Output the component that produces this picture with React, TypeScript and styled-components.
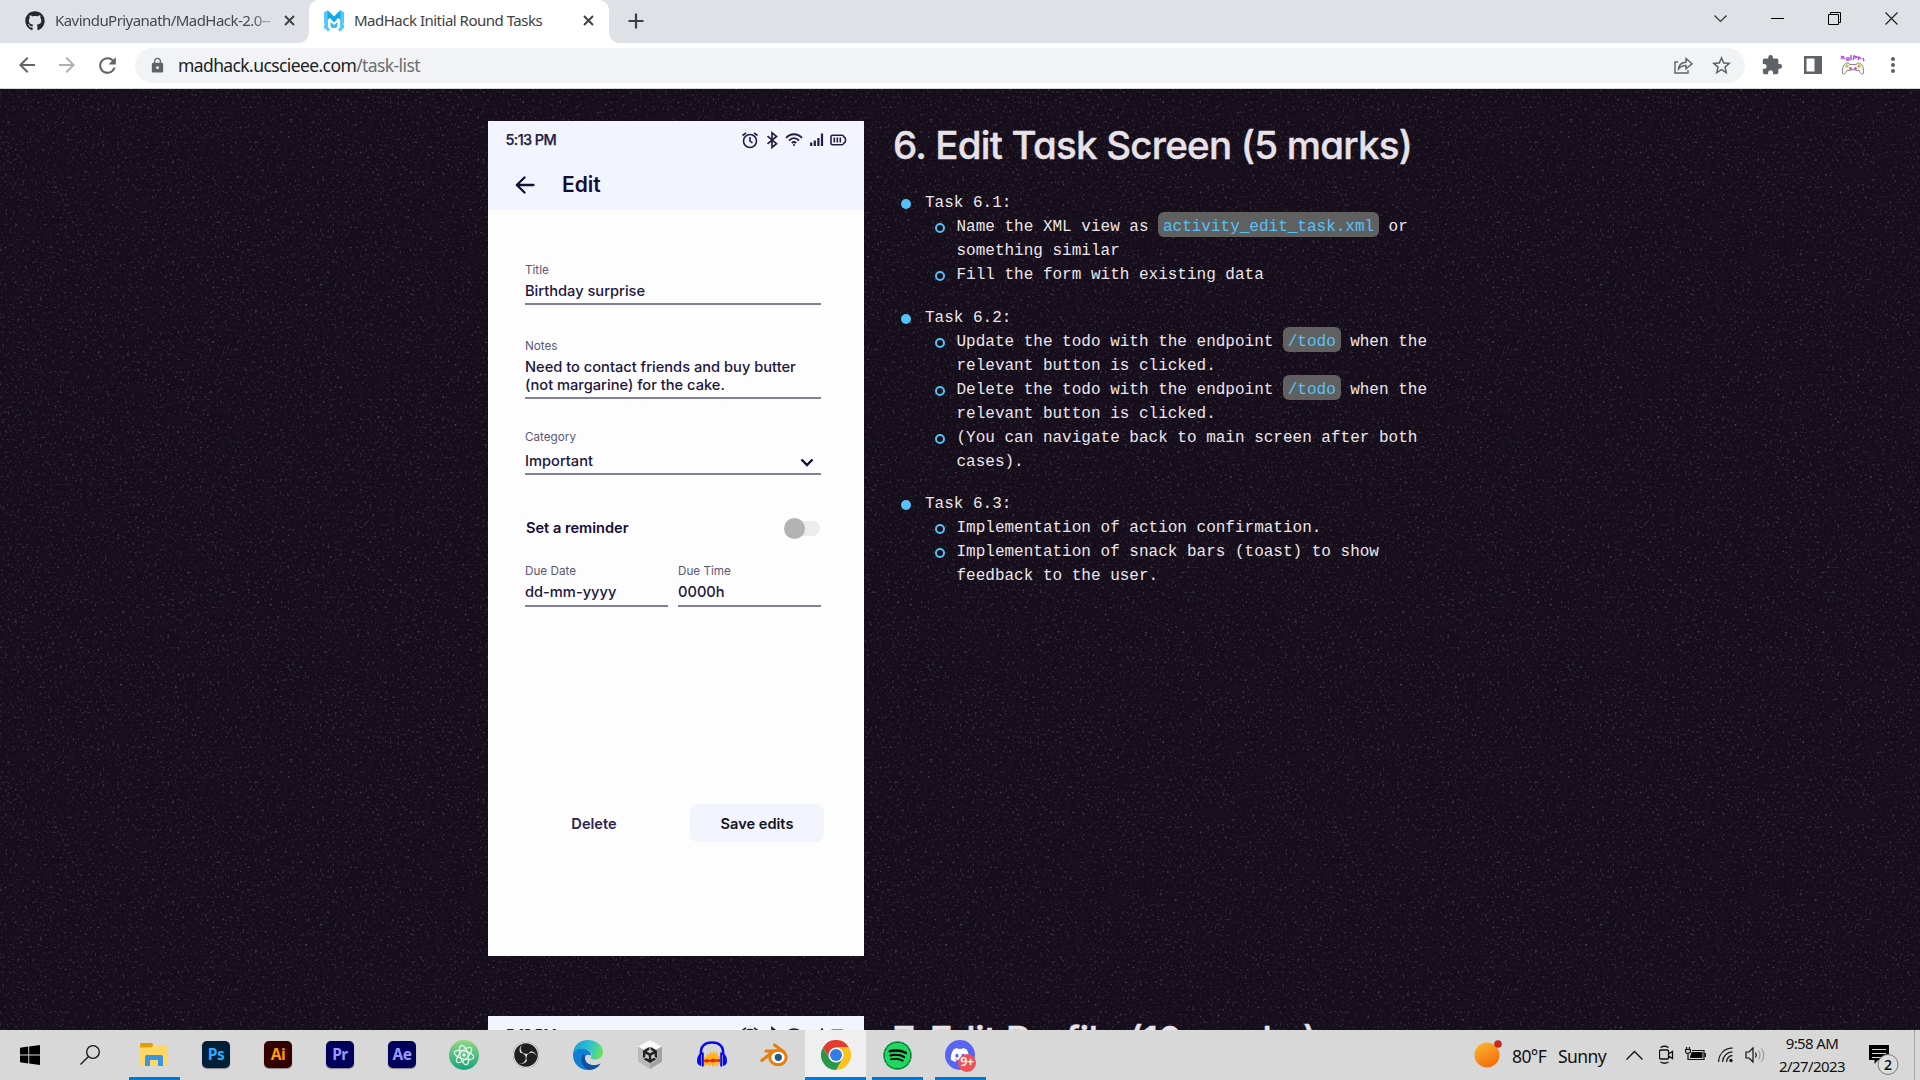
import React from "react";
import styled, { createGlobalStyle } from "styled-components";
import {
  MdArrowBack,
  MdArrowForward,
  MdRefresh,
  MdLock,
  MdStarOutline,
  MdExtension,
  MdMoreVert,
} from "react-icons/md";
import { FaGithub, FaSpotify, FaDiscord } from "react-icons/fa";
import { SiObsstudio, SiUnity } from "react-icons/si";

const GlobalStyle = createGlobalStyle`
  * { box-sizing: border-box; }
  html, body { margin: 0; padding: 0; }
  body { width: 1920px; height: 1080px; overflow: hidden; background: #170e1b; }
  svg { display: block; flex-shrink: 0; }
`;

const ui = `"Noto Sans", "Open Sans", sans-serif`;

const Screen = styled.div`
  width: 1920px;
  height: 1080px;
  display: flex;
  flex-direction: column;
  overflow: hidden;
`;

/* ---------- browser chrome ---------- */

const TabStrip = styled.div`
  height: 43px;
  background: #dee1e6;
  display: flex;
  align-items: stretch;
`;

const Tab = styled.div<{ $active?: boolean; $width: number }>`
  position: relative;
  width: ${(p) => p.$width}px;
  display: flex;
  align-items: center;
  padding: 0 15px 2px 15px;
  padding-right: ${(p) => (p.$active ? 15 : 14)}px;
  padding-left: ${(p) => (p.$active ? 15 : 25)}px;
  background: ${(p) => (p.$active ? "#fff" : "transparent")};
  border-radius: 10px 10px 0 0;
  &::before,
  &::after {
    content: "";
    display: ${(p) => (p.$active ? "block" : "none")};
    position: absolute;
    bottom: 0;
    width: 10px;
    height: 10px;
  }
  &::before {
    left: -10px;
    background: radial-gradient(circle at 0 0, transparent 9.5px, #fff 10px);
  }
  &::after {
    right: -10px;
    background: radial-gradient(circle at 100% 0, transparent 9.5px, #fff 10px);
  }
`;

const TabTitle = styled.span<{ $fade?: boolean }>`
  flex: 1;
  margin-left: 10px;
  padding-bottom: 2px;
  font: 400 15px/20px ${ui};
  letter-spacing: ${(p) => (p.$fade ? -0.55 : -0.5)}px;
  color: ${(p) => (p.$fade ? "#45494d" : "#3c4043")};
  white-space: nowrap;
  overflow: hidden;
  ${(p) => p.$fade && "mask-image: linear-gradient(90deg, #000 85%, transparent 99%);"}
`;

const NewTab = styled.div`
  display: flex;
  align-items: center;
  margin-left: 19px;
  padding-bottom: 1px;
`;

const WindowButtons = styled.div`
  margin-left: auto;
  display: flex;
  align-items: flex-start;
  gap: 44px;
  padding: 12px 22px 0 0;
`;

const Toolbar = styled.div`
  height: 46px;
  background: #fff;
  border-bottom: 1px solid #d5d7da;
  display: flex;
  align-items: center;
  padding: 0 10px 1px 15px;
  color: #5f6368;
`;

const NavButton = styled.div<{ $dim?: boolean }>`
  width: 24px;
  height: 24px;
  margin-right: 16px;
  opacity: ${(p) => (p.$dim ? 0.5 : 1)};
`;

const Omnibox = styled.div`
  width: 1610px;
  height: 35px;
  margin-right: 16px;
  border-radius: 18px;
  background: #f1f3f4;
  display: flex;
  align-items: center;
  padding: 0 12px 0 14px;
`;

const Url = styled.div`
  flex: 1;
  margin-left: 12px;
  padding-bottom: 1px;
  font: 400 17.5px/26px ${ui};
  letter-spacing: -0.6px;
  color: #6a6e72;
  b {
    font-weight: 400;
    color: #202124;
  }
`;

const OmniActions = styled.div`
  display: flex;
  align-items: center;
  gap: 17px;
`;

const Extensions = styled.div`
  display: flex;
  align-items: center;
  gap: 18px;
  svg:first-child {
    margin-right: 3px;
  }
  svg:last-child {
    margin-left: -3px;
  }
`;

/* ---------- page ---------- */

const Page = styled.main`
  position: relative;
  height: 941px;
  background: #170e1b;
  overflow: hidden;
`;

const Grain = styled.svg`
  position: absolute;
  inset: 0;
  width: 100%;
  height: 100%;
`;

const Sections = styled.div`
  position: relative;
  display: flex;
  flex-direction: column;
  gap: 60px;
  padding: 32px 0 0 488px;
`;

const Section = styled.section`
  display: flex;
  gap: 30px;
  height: 835px;
`;

const Phone = styled.div`
  width: 376px;
  height: 835px;
  flex-shrink: 0;
  background: #fdfdfd;
  font-family: Inter, sans-serif;
  color: #150d35;
  display: flex;
  flex-direction: column;
`;

const PhoneHeader = styled.div`
  height: 89px;
  background: #f2f4fe;
`;

const StatusBar = styled.div`
  height: 37px;
  display: flex;
  align-items: center;
  padding: 0 17px 0 17.5px;
  color: #241c42;
`;

const Clock = styled.span`
  flex: 1;
  font-size: 14.5px;
  font-weight: 500;
  letter-spacing: -0.6px;
  -webkit-text-stroke: 0.25px #241c42;
`;

const AppBar = styled.div`
  height: 53px;
  display: flex;
  align-items: center;
  gap: 27px;
  padding-left: 27px;
  font-size: 21px;
  font-weight: 600;
`;

const Form = styled.div`
  padding: 51px 43px 0 37px;
  display: flex;
  flex-direction: column;
`;

const Field = styled.div<{ $gap?: number; $bottom?: number; $after?: number }>`
  flex: 1;
  display: flex;
  flex-direction: column;
  gap: ${(p) => p.$gap ?? 3}px;
  padding-bottom: ${(p) => p.$bottom ?? 3}px;
  margin-bottom: ${(p) => p.$after ?? 0}px;
  border-bottom: 2px solid #827f97;
`;

const Label = styled.span`
  font-size: 11.7px;
  line-height: 18px;
  font-weight: 400;
  color: #5c5775;
`;

const Value = styled.span`
  display: flex;
  justify-content: space-between;
  align-items: center;
  padding-right: 7px;
  font-size: 14.65px;
  line-height: 18px;
  font-weight: 500;
  color: #1e163d;
  white-space: pre-line;
`;

const ReminderRow = styled.div`
  display: flex;
  align-items: center;
  justify-content: space-between;
  height: 21px;
  margin: 42px 1px 24px 1px;
  font-size: 14.6px;
  font-weight: 600;
`;

const Switch = styled.div`
  width: 30px;
  height: 15px;
  margin-top: 1px;
  display: flex;
  align-items: center;
  border-radius: 7.5px;
  background: #ececec;
`;

const Knob = styled.span`
  width: 21px;
  height: 21px;
  flex-shrink: 0;
  margin-left: -6px;
  border-radius: 50%;
  background: #b3b3b3;
`;

const FieldPair = styled.div`
  display: flex;
  gap: 10px;
`;

const Actions = styled.div`
  display: flex;
  align-items: center;
  justify-content: flex-end;
  margin-top: auto;
  padding: 0 40px 0 0;
  margin-bottom: 114px;
`;

const PhoneButton = styled.button<{ $filled?: boolean }>`
  width: ${(p) => (p.$filled ? 134 : 120)}px;
  height: 38px;
  margin-right: ${(p) => (p.$filled ? 0 : 36)}px;
  padding: 2px 0 0;
  border: 0;
  border-radius: 8px;
  background: ${(p) => (p.$filled ? "#f2f4fe" : "transparent")};
  color: ${(p) => (p.$filled ? "#16131c" : "#2d2450")};
  font: 600 14.6px/18px Inter, sans-serif;
`;

const Notes = styled.div`
  width: 560px;
`;

const Heading = styled.h2`
  margin: 0 0 22px -1px;
  font: 500 38.5px/48px Inter, sans-serif;
  font-feature-settings: "cv11";
  letter-spacing: -0.76px;
  -webkit-text-stroke: 0.4px #e7e1e8;
  color: #e7e1e8;
  white-space: nowrap;
`;

const Mono = styled.div`
  font: 400 16px/24px "Liberation Mono", monospace;
  color: #ebe6ec;
`;

const Task = styled.div`
  margin-bottom: 18.6px;
`;

const Item = styled.div<{ $sub?: boolean }>`
  display: flex;
  padding-left: ${(p) => (p.$sub ? 41 : 7)}px;
  white-space: pre;
`;

const Dot = styled.span`
  width: 10px;
  height: 10px;
  margin: 8px 14px 0 0;
  border-radius: 50%;
  background: #55c2f7;
`;

const Ring = styled.span`
  width: 10px;
  height: 10px;
  margin: 8px 11.500px 0 0;
  border-radius: 50%;
  border: 2px solid #55c2f7;
`;

const Code = styled.code`
  font: inherit;
  color: #55c2f7;
  background: #606060;
  border-radius: 6px;
  padding: 6px 4.8px 1px;
`;

/* ---------- taskbar ---------- */

const Taskbar = styled.footer`
  height: 50px;
  background: #d8d8d8;
  display: flex;
  align-items: stretch;
  font-family: ${ui};
  color: #111;
`;

const TaskCell = styled.div<{ $width?: number; $before?: number; $open?: boolean; $active?: boolean }>`
  width: ${(p) => p.$width ?? 62}px;
  margin-left: ${(p) => p.$before ?? 0}px;
  display: flex;
  align-items: center;
  justify-content: center;
  background: ${(p) => {
    const line = "linear-gradient(#0078d7, #0078d7)";
    if (p.$active) return `${line} 50% 100% / 61px 3px no-repeat, #efefef`;
    if (p.$open) return `${line} 50% 100% / 51px 3px no-repeat`;
    return "transparent";
  }};
`;

const Adobe = styled.span<{ $bg: string; $fg: string }>`
  width: 28px;
  height: 27px;
  margin-bottom: 2px;
  border-radius: 5px;
  background: ${(p) => p.$bg};
  color: ${(p) => p.$fg};
  font: 700 15.5px/26px ${ui};
  letter-spacing: -0.5px;
  text-align: center;
  box-shadow: 0 1px 1px rgba(0, 0, 0, 0.35);
`;

const Round = styled.span<{ $bg: string; $fg: string; $size: number }>`
  width: ${(p) => p.$size}px;
  height: ${(p) => p.$size}px;
  border-radius: 50%;
  background: ${(p) => p.$bg};
  color: ${(p) => p.$fg};
  position: relative;
  display: flex;
  align-items: center;
  justify-content: center;
`;

const SpotifyMark = styled(FaSpotify)`
  color: #1ed760;
  background: #000;
  border: 1px solid #1ed760;
  border-radius: 50%;
`;

const Badge = styled.span`
  position: absolute;
  left: 13px;
  top: 14px;
  width: 18px;
  height: 18px;
  border-radius: 50%;
  background: #ef5254;
  color: #fff;
  font: 600 12.5px/16px ${ui};
  letter-spacing: -0.5px;
  text-align: center;
`;

const Tray = styled.div`
  margin-left: auto;
  display: flex;
  align-items: center;
`;

const Weather = styled.span`
  width: 94px;
  margin-left: 10px;
  padding-top: 1px;
  display: flex;
  justify-content: space-between;
  font-size: 17.5px;
  line-height: 24px;
  letter-spacing: -0.6px;
`;

const TrayIcons = styled.div`
  display: flex;
  align-items: center;
  margin-left: 20px;
`;

const DateTime = styled.div`
  width: 74px;
  margin-left: 9px;
  font-size: 15px;
  line-height: 23px;
  letter-spacing: -0.6px;
  text-align: center;
  white-space: nowrap;
`;

const Notify = styled.div`
  margin-left: 17px;
  width: 49px;
  height: 50px;
  border-right: 1px solid #a5a5a5;
  margin-right: 5px;
`;

const CloseGlyph = () => (
  <svg width="11" height="11" viewBox="0 0 11 11" stroke="#3c4043" strokeWidth="1.9">
    <path d="M1 1l9 9M10 1l-9 9" />
  </svg>
);

const Favicon = () => (
  <svg width="20" height="22" viewBox="0 0 20 22">
    <path d="M0 2l4-1.500V17l2 3-2 1.500-4-3.500v-3l1-1-1-1zM20 2l-4-1.500V17l-2 3 2 1.500 4-3.500v-3l-1-1 1-1z" fill="#55c8fa" />
    <path d="M3.500 0L10 6.500 16.500 0v9.500L14 8l-4 4.500L6 8l-2.500 1.500z" fill="#10abe8" />
    <path d="M6.500 12l3.500 3 3.500-3v4L12 18H8l-1.500-2z" fill="#35bbf4" />
  </svg>
);

const PhoneStatusIcons = () => (
  <svg width="106" height="20" viewBox="0 0 106 20" fill="none" stroke="#241c42" strokeWidth="1.6">
    <circle cx="9" cy="11" r="6.500" />
    <path d="M9 7v4l2.500 2M1.500 5.500L5 2.800M16.500 5.500L13 2.800" />
    <path d="M26.500 6.200l9 7.500-4.500 3.800V2.800l4.500 3.600-9 7.500" strokeWidth="1.7" />
    <path d="M45 8c4.500-5 11.500-5 16 0M48 10.500c3-3 7-3 10 0M50.800 13c1.400-1.300 3-1.300 4.400 0" strokeWidth="1.8" />
    <circle cx="53" cy="15" r="1" fill="#241c42" stroke="none" />
    <path d="M70.200 16v-3.500M73.800 16v-5.500M77.400 16V8M81 16V3.500" strokeWidth="2.200" />
    <path d="M91.500 5.300h9.500q1.500 0 1.800 1.500 1.700.7 1.700 2.500v1.500q0 1.700-1.700 2.400-.3 1.500-1.800 1.500h-9.500q-1.500 0-1.500-1.500V6.800q0-1.500 1.500-1.500zM93.300 7.500v5M96.300 7.500v5M99.300 7.500v5" strokeWidth="1.600" />
  </svg>
);

const Status = () => (
  <StatusBar>
    <Clock>5:13 PM</Clock>
    <PhoneStatusIcons />
  </StatusBar>
);

const EditPhone = () => (
  <Phone>
    <PhoneHeader>
      <Status />
      <AppBar>
        <svg width="20" height="18" viewBox="0 0 20 18" fill="none" stroke="#150d35" strokeWidth="2.3" strokeLinecap="round" strokeLinejoin="round">
          <path d="M18.500 9H2M9.500 1.500L1.800 9l7.700 7.500" />
        </svg>
        Edit
      </AppBar>
    </PhoneHeader>
    <Form>
      <Field $after={32}>
        <Label>Title</Label>
        <Value>Birthday surprise</Value>
      </Field>
      <Field $after={29}>
        <Label>Notes</Label>
        <Value>{"Need to contact friends and buy butter\n(not margarine) for the cake."}</Value>
      </Field>
      <Field $gap={6}>
        <Label>Category</Label>
        <Value>
          Important
          <svg width="14" height="12" viewBox="0 -3 14 12" fill="none" stroke="#150d35" strokeWidth="2.4">
            <path d="M1.500 1.500L7 7l5.500-5.500" />
          </svg>
        </Value>
      </Field>
      <ReminderRow>
        Set a reminder
        <Switch>
          <Knob />
        </Switch>
      </ReminderRow>
      <FieldPair>
        <Field $bottom={4}>
          <Label>Due Date</Label>
          <Value>dd-mm-yyyy</Value>
        </Field>
        <Field $bottom={4}>
          <Label>Due Time</Label>
          <Value>0000h</Value>
        </Field>
      </FieldPair>
    </Form>
    <Actions>
      <PhoneButton>Delete</PhoneButton>
      <PhoneButton $filled>Save edits</PhoneButton>
    </Actions>
  </Phone>
);

const tasks: { title: string; items: React.ReactNode[] }[] = [
  {
    title: "Task 6.1:",
    items: [
      <>Name the XML view as <Code>activity_edit_task.xml</Code> or{"\n"}something similar</>,
      "Fill the form with existing data",
    ],
  },
  {
    title: "Task 6.2:",
    items: [
      <>Update the todo with the endpoint <Code>/todo</Code> when the{"\n"}relevant button is clicked.</>,
      <>Delete the todo with the endpoint <Code>/todo</Code> when the{"\n"}relevant button is clicked.</>,
      "(You can navigate back to main screen after both\ncases).",
    ],
  },
  {
    title: "Task 6.3:",
    items: [
      "Implementation of action confirmation.",
      "Implementation of snack bars (toast) to show\nfeedback to the user.",
    ],
  },
];

const Explorer = () => (
  <svg width="28" height="24" viewBox="0 0 28 24">
    <path d="M0 1.500Q0 0 1.500 0H12l1.500 2L12 5H0z" fill="#dfa000" />
    <path d="M0 4.500h11l2.500-2.500H28v18.500Q28 22 26.500 22h-25Q0 22 0 20.500z" fill="#ffd764" />
    <path d="M5 23V14q0-2 2-2h14q2 0 2 2v9h-5v-6h-8v6z" fill="#3a96dd" />
  </svg>
);

const AtomIcon = () => (
  <svg width="24" height="24" viewBox="0 0 24 24" fill="none" stroke="currentColor" strokeWidth="1.2">
    <ellipse cx="12" cy="12" rx="10" ry="4" transform="rotate(15 12 12)" />
    <ellipse cx="12" cy="12" rx="10" ry="4" transform="rotate(75 12 12)" />
    <ellipse cx="12" cy="12" rx="10" ry="4" transform="rotate(-45 12 12)" />
    <circle cx="12" cy="12" r="1.200" fill="currentColor" />
  </svg>
);

const EdgeIcon = () => (
  <svg width="30" height="30" viewBox="0 0 30 30">
    <defs>
      <linearGradient id="edgeTop" x1="0" y1=".3" x2="1" y2=".5">
        <stop offset="0" stopColor="#169fda" />
        <stop offset=".6" stopColor="#35c6c8" />
        <stop offset="1" stopColor="#6be05a" />
      </linearGradient>
    </defs>
    <path d="M0 15C0 5 7 0 15 0c9 0 15 6 15 12 0 5-4 7.500-8 7.500-3 0-5-1-4-2.500 2-3 0-7-5-7C7 10 1 12 0 15z" fill="url(#edgeTop)" />
    <path d="M0 15C1 9.500 6 8.500 10 9c6 .5 9 4 8 7-1-2-6-2-6 2 0 5 5 8 10 7.500 2 0 4-1 5.500-2C25 28 20 30 15 30 6 30 0 23 0 15z" fill="#0f7fd4" />
    <path d="M10.500 14C6 18 9 29 17 29.800 21.500 29.500 25 27.500 27.500 23.500c-5 3-14 2-15.500-4-.5-2 0-3.500 0-3.500z" fill="#11519c" />
  </svg>
);

const AudacityIcon = () => (
  <svg width="30" height="28" viewBox="0 0 30 28">
    <path d="M7 24V15l2 2 1-5 2 3 1-5 2 3 2-4 1 5 2-4 1 6 2-2v10l-2-2-1 4-2-3-2 3-2-3-2 3-1-4-2 3z" fill="#ffb21a" />
    <path d="M7 19l3-1 3 1 3-1.500 3 1 4-.500v3l-4-.500-3 1-3-1-3 1-3-.500z" fill="#e8251b" />
    <path d="M4 14C3 5 8 1.500 15 1.500S27 5 26 14" fill="none" stroke="#0909e6" strokeWidth="2.600" />
    <path d="M4 12q-4 2-4 8 0 4 4 5zM26 12q4 2 4 8 0 4-4 5zM4.600 11.500h2.200v14H4.600zM23.200 11.500h2.200v14h-2.200z" fill="#0909e6" />
  </svg>
);

const ChromeIcon = () => (
  <svg width="30" height="30" viewBox="0 0 48 48">
    <path d="M24 12h20.800A24 24 0 0 0 3.200 12l10.400 18z" fill="#e33b2e" />
    <path d="M34.400 30L24 48A24 24 0 0 0 44.800 12H24z" fill="#fcc31e" />
    <path d="M13.600 30L3.200 12A24 24 0 0 0 24 48l10.400-18z" fill="#279847" />
    <circle cx="24" cy="24" r="12" fill="#fff" />
    <circle cx="24" cy="24" r="9.600" fill="#2f7de9" />
  </svg>
);

const BlenderIcon = () => (
  <svg width="28" height="24" viewBox="0 0 28 24" fill="none" stroke="#e87d0d" strokeWidth="3" strokeLinecap="round" strokeLinejoin="round">
    <path d="M14.500 2l9.500 7M6 8h13M1.800 17.500L13 8.500" />
    <ellipse cx="18" cy="14.500" rx="8.200" ry="7.300" fill="#fff" />
    <circle cx="18.300" cy="14.300" r="3.600" fill="#265787" stroke="none" />
  </svg>
);

const UnityIcon = () => (
  <svg width="26" height="30" viewBox="0 0 26 30">
    <path d="M13 0l12 6.500v15L13 29 1 21.500v-15z" fill="#b9b9b9" />
    <path d="M13 0l12 6.500-12 7-12-7z" fill="#fafafa" />
    <path d="M13 13.500l12-7v15L13 29z" fill="#a2a2a2" />
    <circle cx="13" cy="15" r="8" fill="#c9c9c9" />
    <SiUnity x="5" y="7" width="16" height="16" color="#222" />
  </svg>
);

const ProfileIcon = () => (
  <svg width="26" height="20" viewBox="0 0 26 20">
    <path d="M1 1l4 3M4 1L1 4M7 2v3h2V2M11 0v5M13 5l1-4 3 1-2 1.500M18 5l1-3 2 2M23 3l1 3" stroke="#b545e8" strokeWidth="1.400" fill="none" />
    <path d="M2.500 18C2 12 4 8 8 8l2 1.500h6L18 8c4 0 6 4 5.500 10 0 2-3 1.500-4.500-2.500h-2q-4-2-8 0H7c-1.500 4-4.500 4.500-4.500 2.500z" fill="#f7f5f7" stroke="#8b858b" strokeWidth="1" />
    <circle cx="7" cy="11" r="1.800" fill="#b6d432" />
    <circle cx="19" cy="11" r="1.800" fill="#d6b732" />
    <circle cx="10.500" cy="13.500" r="1.300" fill="#b545b8" />
    <circle cx="15.500" cy="13.500" r="1.300" fill="#b545b8" />
  </svg>
);

export default function App() {
  return (
    <Screen>
      <GlobalStyle />
      <TabStrip>
        <Tab $width={309}>
          <FaGithub size={20} color="#24292f" />
          <TabTitle $fade>KavinduPriyanath/MadHack-2.0--</TabTitle>
          <CloseGlyph />
        </Tab>
        <Tab $active $width={300}>
          <Favicon />
          <TabTitle>MadHack Initial Round Tasks</TabTitle>
          <CloseGlyph />
        </Tab>
        <NewTab>
          <svg width="16" height="16" viewBox="0 0 16 16" stroke="#3c4043" strokeWidth="2.200">
            <path d="M8 .5v15M.5 8h15" />
          </svg>
        </NewTab>
        <WindowButtons>
          <svg width="13" height="13" viewBox="0 0 13 13" fill="none" stroke="#333" strokeWidth="1.200">
            <path d="M.5 3.500l6 6 6-6" />
          </svg>
          <svg width="13" height="13" viewBox="0 0 13 13" stroke="#000">
            <path d="M0 6.500h13" />
          </svg>
          <svg width="13" height="13" viewBox="0 0 13 13" fill="none" stroke="#000">
            <path d="M.5 2.500h10v10H.5zM2.500 2.500v-2h10v10h-2" />
          </svg>
          <svg width="13" height="13" viewBox="0 0 13 13" stroke="#222" strokeWidth="1.200">
            <path d="M.5.5l12 12M12.500.5l-12 12" />
          </svg>
        </WindowButtons>
      </TabStrip>
      <Toolbar>
        <NavButton><MdArrowBack size={24} /></NavButton>
        <NavButton $dim><MdArrowForward size={24} /></NavButton>
        <NavButton><MdRefresh size={25} /></NavButton>
        <Omnibox>
          <MdLock size={17} />
          <Url><b>madhack.ucscieee.com</b>/task-list</Url>
          <OmniActions>
            <svg width="19" height="17" viewBox="0 0 19 17" fill="none" stroke="#5f6368" strokeWidth="1.400">
              <path d="M4 5H1v11h13v-3M4.500 12c.5-4.500 3-6.500 7.500-6.700V1.500l6 5.300-6 5V8.500C8.500 8.500 6.500 9.500 4.500 12z" />
            </svg>
            <MdStarOutline size={23} />
          </OmniActions>
        </Omnibox>
        <Extensions>
          <MdExtension size={22} />
          <svg width="18" height="18" viewBox="0 0 18 18">
            <path d="M0 0h18v18H0zM2.500 2.500v13h8v-13z" fill="#5f6368" fillRule="evenodd" />
          </svg>
          <ProfileIcon />
          <MdMoreVert size={24} />
        </Extensions>
      </Toolbar>

      <Page>
        <Grain>
          <filter id="grain" x="0" y="0" width="100%" height="100%">
            <feTurbulence type="fractalNoise" baseFrequency="0.4" numOctaves="2" seed="7" />
            <feColorMatrix values="0 0 0 0 0.3  0 0 0 0 0.35  0 0 0 0 0.4  1.3 0 0 0 -0.78" />
          </filter>
          <rect width="100%" height="100%" filter="url(#grain)" />
        </Grain>
        <Sections>
          <Section>
            <EditPhone />
            <Notes>
              <Heading>6. Edit Task Screen (5 marks)</Heading>
              <Mono>
                {tasks.map((task) => (
                  <Task key={task.title}>
                    <Item>
                      <Dot />
                      {task.title}
                    </Item>
                    {task.items.map((item, i) => (
                      <Item $sub key={i}>
                        <Ring />
                        <div>{item}</div>
                      </Item>
                    ))}
                  </Task>
                ))}
              </Mono>
            </Notes>
          </Section>
          <Section>
            <Phone>
              <PhoneHeader>
                <Status />
              </PhoneHeader>
            </Phone>
            <Notes>
              <Heading>7. Edit Profile (10 marks)</Heading>
            </Notes>
          </Section>
        </Sections>
      </Page>

      <Taskbar>
        <TaskCell $width={60}>
          <svg width="20" height="20" viewBox="0 0 20 20">
            <path d="M0 2.800L8.300 1.600V9.500H0zM9.200 1.500L20 0v9.500H9.200zM0 10.400h8.300v8L0 17.200zM9.200 10.400H20V20L9.200 18.500z" />
          </svg>
        </TaskCell>
        <TaskCell $width={60}>
          <svg width="20" height="20" viewBox="0 0 20 20" fill="none" stroke="#111" strokeWidth="1.300">
            <circle cx="13" cy="7" r="6.300" />
            <path d="M8.500 11.500L.5 19.500" />
          </svg>
        </TaskCell>
        <TaskCell $open $before={3}><Explorer /></TaskCell>
        <TaskCell><Adobe $bg="#001e36" $fg="#31a8ff">Ps</Adobe></TaskCell>
        <TaskCell><Adobe $bg="#330000" $fg="#ff9a00">Ai</Adobe></TaskCell>
        <TaskCell><Adobe $bg="#00005b" $fg="#9999ff">Pr</Adobe></TaskCell>
        <TaskCell><Adobe $bg="#00005b" $fg="#9999ff">Ae</Adobe></TaskCell>
        <TaskCell>
          <Round $bg="linear-gradient(#93d689, #15a577)" $fg="#e9faee" $size={30}><AtomIcon /></Round>
        </TaskCell>
        <TaskCell>
          <Round $bg="#1f1f22" $fg="#e4e4e4" $size={26}><SiObsstudio size={26} /></Round>
        </TaskCell>
        <TaskCell><EdgeIcon /></TaskCell>
        <TaskCell><UnityIcon /></TaskCell>
        <TaskCell><AudacityIcon /></TaskCell>
        <TaskCell><BlenderIcon /></TaskCell>
        <TaskCell $active $width={61}><ChromeIcon /></TaskCell>
        <TaskCell $open $width={63}><SpotifyMark size={29} /></TaskCell>
        <TaskCell $open>
          <Round $bg="#5865f2" $fg="#fff" $size={30}>
            <FaDiscord size={20} />
            <Badge>9+</Badge>
          </Round>
        </TaskCell>
        <Tray>
          <svg width="28" height="30" viewBox="0 0 28 30">
            <defs>
              <linearGradient id="sun" x1=".2" y1="0" x2=".7" y2="1">
                <stop offset="0" stopColor="#f8b62d" />
                <stop offset="1" stopColor="#f56a0a" />
              </linearGradient>
            </defs>
            <circle cx="13" cy="15" r="12.500" fill="url(#sun)" />
            <circle cx="24" cy="4" r="3.800" fill="#c8291f" />
          </svg>
          <Weather><span>80°F</span><span>Sunny</span></Weather>
          <TrayIcons>
            <svg width="33" height="11" viewBox="0 0 33 11" fill="none" stroke="#111" strokeWidth="1.400">
              <path d="M.5 9.500l8-8 8 8" />
            </svg>
            <svg width="26" height="20" viewBox="6 0 26 20" fill="none" stroke="#111" strokeWidth="1.300">
              <path d="M8 5h6.500q1 0 1 1v7q0 1-1 1H8q-1.500 0-1.500-1V6q0-1 1.500-1zM15.500 9l4-2.500v7L15.500 11M7.500 2.500q4-2.500 8 0M7.500 17q4 2.500 8 0" />
            </svg>
            <svg width="33" height="16" viewBox="0 0 33 16" fill="none" stroke="#111" strokeWidth="1.200">
              <path d="M7 3.500h12v9H4.500M20.300 6v4M1.600 0v2.500M4.400 0v2.500M.6 2.500h4.800v2q0 1.500-2.400 1.800T.6 4.500zM3 6.500v6h2M19 3.500v9" />
              <path d="M7 5.500h10v5H5.500z" fill="#000" />
            </svg>
            <svg width="27" height="18" viewBox="2 0 27 18" fill="none" stroke="#222" strokeWidth="1.300">
              <path d="M2.500 16C3 8 8 2.500 16.500 2M6.500 16C7 10 11 6 16.500 5.800M10.500 16c.5-4 3-6.300 6-6.500" />
              <circle cx="15" cy="14.500" r="1.700" fill="#111" stroke="none" />
            </svg>
            <svg width="21" height="18" viewBox="0 0 21 18" fill="none" stroke="#111" strokeWidth="1.200">
              <path d="M1 6h3l4-4v14l-4-4H1zM10.500 6.500q1.500 2.500 0 5" />
              <path d="M13.500 4.500q3 4.500 0 9M16.500 2.500q4.500 6.500 0 13" stroke="#999" />
            </svg>
          </TrayIcons>
          <DateTime>
            9:58 AM
            <br />
            2/27/2023
          </DateTime>
          <Notify>
            <svg width="34" height="50" viewBox="0 0 34 50">
              <path d="M3 15h20v15H12l-3.500 4V30H3z" />
              <path d="M6 19.500h14M6 23.500h14M6 27.500h9" stroke="#d8d8d8" strokeWidth="1.200" />
              <circle cx="22" cy="34.500" r="10" fill="#dcdcdc" stroke="#777" />
              <text x="22" y="39.500" textAnchor="middle" fontFamily="Noto Sans" fontWeight="500" fontSize="14">2</text>
            </svg>
          </Notify>
        </Tray>
      </Taskbar>
    </Screen>
  );
}
